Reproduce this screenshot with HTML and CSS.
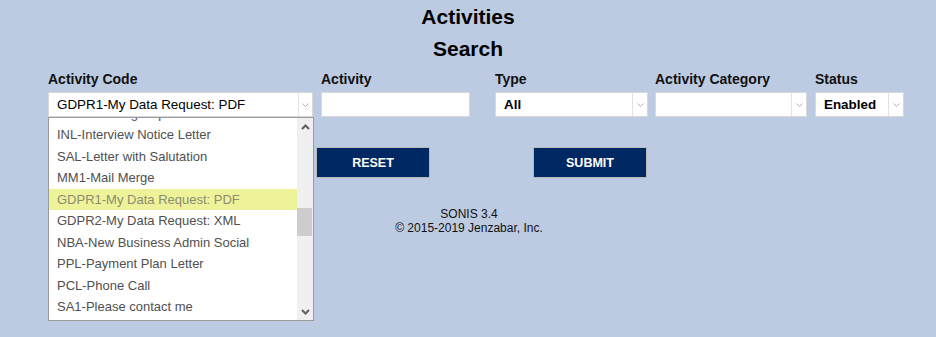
FILE: index.html
```html
<!DOCTYPE html>
<html lang="en">
<head>
    <meta charset="UTF-8">
    <title>Activities</title>
    <link rel="stylesheet" href="styles.css">
</head>
<body>
    <header class="page-title">
        <h1>Activities</h1>
        <h2>Search</h2>
    </header>

    <form class="search">
        <div class="fields">
            <div class="field">
                <label>Activity Code</label>
                <div class="select select-code">
                    <span class="value">GDPR1-My Data Request: PDF</span>
                    <span class="arrow"><svg width="7" height="4" viewBox="0 0 7 4"><path d="M0.5 0.5 L3.5 3.5 L6.5 0.5" fill="none" stroke="#b0b0b0" stroke-width="1"/></svg></span>
                </div>
                <div class="dropdown">
                    <ul>
                        <li>MLG1-Mailing Report</li>
                        <li>INL-Interview Notice Letter</li>
                        <li>SAL-Letter with Salutation</li>
                        <li>MM1-Mail Merge</li>
                        <li class="selected">GDPR1-My Data Request: PDF</li>
                        <li>GDPR2-My Data Request: XML</li>
                        <li>NBA-New Business Admin Social</li>
                        <li>PPL-Payment Plan Letter</li>
                        <li>PCL-Phone Call</li>
                        <li>SA1-Please contact me</li>
                    </ul>
                    <div class="scrollbar">
                        <span class="scroll-btn"><svg width="9" height="6" viewBox="0 0 9 6"><path d="M1 5 L4.5 1.5 L8 5" fill="none" stroke="#606060" stroke-width="2"/></svg></span>
                        <span class="thumb"></span>
                        <span class="scroll-btn scroll-down"><svg width="9" height="6" viewBox="0 0 9 6"><path d="M1 1 L4.5 4.5 L8 1" fill="none" stroke="#606060" stroke-width="2"/></svg></span>
                    </div>
                </div>
            </div>
            <div class="field">
                <label>Activity</label>
                <input type="text" class="input-activity">
            </div>
            <div class="field">
                <label>Type</label>
                <div class="select select-type">
                    <span class="value bold">All</span>
                    <span class="arrow"><svg width="7" height="4" viewBox="0 0 7 4"><path d="M0.5 0.5 L3.5 3.5 L6.5 0.5" fill="none" stroke="#b0b0b0" stroke-width="1"/></svg></span>
                </div>
            </div>
            <div class="field">
                <label>Activity Category</label>
                <div class="select select-category">
                    <span class="value"></span>
                    <span class="arrow"><svg width="7" height="4" viewBox="0 0 7 4"><path d="M0.5 0.5 L3.5 3.5 L6.5 0.5" fill="none" stroke="#b0b0b0" stroke-width="1"/></svg></span>
                </div>
            </div>
            <div class="field">
                <label>Status</label>
                <div class="select select-status">
                    <span class="value bold">Enabled</span>
                    <span class="arrow"><svg width="7" height="4" viewBox="0 0 7 4"><path d="M0.5 0.5 L3.5 3.5 L6.5 0.5" fill="none" stroke="#b0b0b0" stroke-width="1"/></svg></span>
                </div>
            </div>
        </div>

        <div class="actions">
            <button type="reset">RESET</button>
            <button type="submit">SUBMIT</button>
        </div>
    </form>

    <footer>
        <p>SONIS 3.4</p>
        <p>&copy; 2015-2019 Jenzabar, Inc.</p>
    </footer>
</body>
</html>
```

FILE: styles.css
```css
* {
    margin: 0;
    padding: 0;
    box-sizing: border-box;
    font-family: "Liberation Sans", Arial, sans-serif;
}

html,
body {
    min-height: 100vh;
}

body {
    background-color: #bccbe2;
    color: #111;
}

.page-title {
    padding-top: 5px;
    text-align: center;
}

.page-title h1,
.page-title h2 {
    font-size: 21px;
    line-height: 24px;
    font-weight: bold;
    color: #000;
}

.page-title h2 {
    margin-top: 8px;
}

.search {
    margin-top: 10px;
}

.fields {
    display: grid;
    grid-template-columns: 273px 174px 160px 160px auto;
    padding-left: 48px;
}

.field {
    position: relative;
}

.field label {
    display: block;
    font-size: 14px;
    line-height: 16px;
    font-weight: bold;
    margin-bottom: 5px;
}

.select {
    display: flex;
    height: 25px;
    background: white;
    border: 1px solid #d8d8d8;
}

.select .value {
    flex: 1;
    padding-left: 8px;
    font-size: 13.4px;
    line-height: 23px;
    color: #000;
    white-space: nowrap;
    overflow: hidden;
}

.select .bold {
    font-weight: bold;
}

.select .arrow {
    width: 15px;
    border-left: 1px solid #e2e2e2;
    display: flex;
    align-items: center;
    justify-content: center;
}

.select-code { width: 265px; }
.select-code .arrow { width: 14px; }
.select-type { width: 153px; }
.select-category { width: 152px; }
.select-status { width: 89px; }

.input-activity {
    display: block;
    width: 149px;
    height: 25px;
    border: 1px solid #d8d8d8;
    background: white;
}

.dropdown {
    position: absolute;
    top: 46px;
    left: 0;
    width: 266px;
    height: 204px;
    background: white;
    border: 1px solid #9a9a9a;
    overflow: hidden;
    display: flex;
    z-index: 2;
}

.dropdown ul {
    flex: 1;
    list-style: none;
    margin-top: -15.5px;
}

.dropdown li {
    height: 21.5px;
    line-height: 21.5px;
    padding-left: 8px;
    font-size: 13px;
    color: #505050;
    white-space: nowrap;
}

.dropdown li.selected {
    background: #eef39a;
    color: #8c8c72;
}

.scrollbar {
    width: 16px;
    background: #f0f0f0;
    position: relative;
}

.scroll-btn {
    position: absolute;
    left: 0;
    width: 16px;
    height: 17px;
    top: 0;
    display: flex;
    align-items: center;
    justify-content: center;
}

.scroll-down {
    top: auto;
    bottom: 0;
}

.thumb {
    position: absolute;
    left: 0;
    top: 90px;
    width: 15px;
    height: 28px;
    background: #cdcdcd;
}

.actions {
    display: flex;
    gap: 103px;
    padding-left: 316px;
    margin-top: 30px;
}

.actions button {
    width: 114px;
    height: 31px;
    background: #002863;
    color: white;
    border: 1px solid #b8b8b8;
    font-size: 12.5px;
    font-weight: bold;
}

footer {
    margin-top: 29px;
    padding-left: 2px;
    text-align: center;
    font-size: 12px;
    line-height: 14px;
    color: #111;
}
```
